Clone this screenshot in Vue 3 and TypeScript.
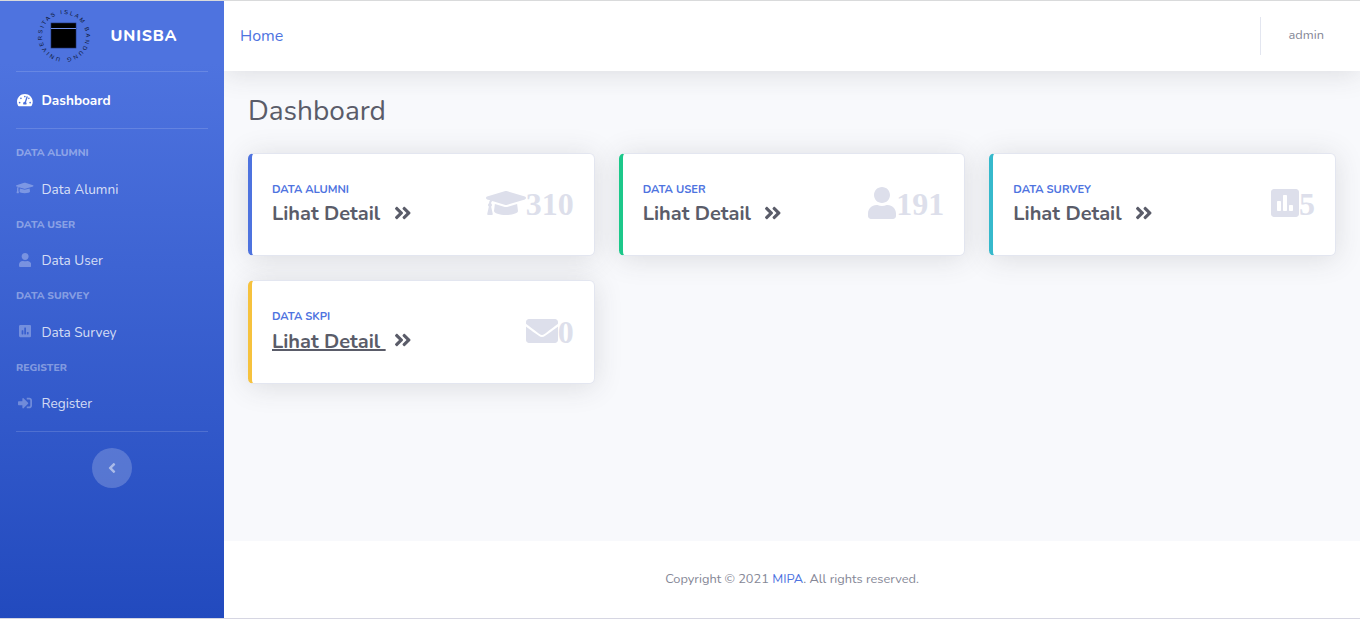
<script setup lang="ts">
interface Icon {
  w: number
  d: string
}

const icons: Record<string, Icon> = {
  tachometer: {
    w: 576,
    d: 'M288 32C128.94 32 0 160.94 0 320c0 52.8 14.25 102.26 39.06 144.8 5.61 9.62 16.3 15.2 27.44 15.2h443c11.14 0 21.83-5.58 27.44-15.2C561.75 422.26 576 372.8 576 320c0-159.06-128.94-288-288-288zm0 64c14.71 0 26.58 10.13 30.32 23.65-1.11 2.26-2.64 4.23-3.45 6.67l-9.22 27.67c-5.13 3.49-10.97 6.01-17.64 6.01-17.67 0-32-14.33-32-32S270.33 96 288 96zM96 384c-17.67 0-32-14.33-32-32s14.33-32 32-32 32 14.33 32 32-14.33 32-32 32zm48-160c-17.67 0-32-14.33-32-32s14.33-32 32-32 32 14.33 32 32-14.33 32-32 32zm246.77-72.41l-61.33 184C343.13 347.33 352 364.54 352 384c0 11.72-3.38 22.55-8.88 32H232.88c-5.5-9.45-8.88-20.28-8.88-32 0-33.94 26.5-61.43 59.9-63.59l61.34-184.01c4.17-12.56 17.73-19.45 30.36-15.17 12.57 4.19 19.35 17.79 15.17 30.36zm14.66 57.2l15.52-46.55c3.47-1.29 7.13-2.23 11.05-2.23 17.67 0 32 14.33 32 32s-14.33 32-32 32c-11.38-.01-20.89-6.28-26.57-15.22zM480 384c-17.67 0-32-14.33-32-32s14.33-32 32-32 32 14.33 32 32-14.33 32-32 32z',
  },
  graduation: {
    w: 640,
    d: 'M622.34 153.2L343.4 67.5c-15.2-4.67-31.6-4.67-46.79 0L17.66 153.2c-23.54 7.23-23.54 38.36 0 45.59l48.63 14.94c-10.67 13.19-17.23 29.28-17.88 46.9C38.78 266.15 32 276.11 32 288c0 10.78 5.68 19.85 13.86 25.65L20.33 428.53C18.11 438.52 25.71 448 35.94 448h56.11c10.24 0 17.84-9.48 15.62-19.47L82.14 313.65C90.32 307.85 96 298.78 96 288c0-11.57-6.47-21.25-15.66-26.87.76-15.02 8.44-28.3 20.69-36.72L296.6 284.5c9.06 2.78 26.44 6.25 46.79 0l278.95-85.7c23.55-7.24 23.55-38.36 0-45.6zM352.79 315.09c-28.53 8.76-52.84 3.92-65.59 0l-145.02-44.55L128 384c0 35.35 85.96 64 192 64s192-28.65 192-64l-14.18-113.47-145.03 44.56z',
  },
  user: {
    w: 448,
    d: 'M224 256c70.7 0 128-57.3 128-128S294.7 0 224 0 96 57.3 96 128s57.3 128 128 128zm89.6 32h-16.7c-22.2 10.2-46.9 16-72.9 16s-50.6-5.8-72.9-16h-16.7C60.2 288 0 348.2 0 422.4V464c0 26.5 21.5 48 48 48h352c26.5 0 48-21.5 48-48v-41.6c0-74.2-60.2-134.4-134.4-134.4z',
  },
  poll: {
    w: 448,
    d: 'M400 32H48C21.5 32 0 53.5 0 80v352c0 26.5 21.5 48 48 48h352c26.5 0 48-21.5 48-48V80c0-26.5-21.5-48-48-48zM160 368c0 8.84-7.16 16-16 16h-32c-8.84 0-16-7.16-16-16V240c0-8.84 7.16-16 16-16h32c8.84 0 16 7.16 16 16v128zm96 0c0 8.84-7.16 16-16 16h-32c-8.84 0-16-7.16-16-16V144c0-8.84 7.16-16 16-16h32c8.84 0 16 7.16 16 16v224zm96 0c0 8.84-7.16 16-16 16h-32c-8.84 0-16-7.16-16-16v-64c0-8.84 7.16-16 16-16h32c8.84 0 16 7.16 16 16v64z',
  },
  envelope: {
    w: 512,
    d: 'M502.3 190.8c3.9-3.1 9.7-.2 9.7 4.7V400c0 26.5-21.5 48-48 48H48c-26.5 0-48-21.5-48-48V195.6c0-5 5.7-7.8 9.7-4.7 22.4 17.4 52.1 39.5 154.1 113.6 21.1 15.4 56.7 47.8 92.2 47.6 35.7.3 72-32.8 92.3-47.6 102-74.1 131.6-96.3 154-113.7zM256 320c23.2.4 56.6-29.2 73.4-41.4 132.7-96.3 142.8-104.7 173.4-128.7 5.8-4.5 9.2-11.5 9.2-18.9v-19c0-26.5-21.5-48-48-48H48c-26.5 0-48 21.5-48 48v19c0 7.4 3.4 14.3 9.2 18.9 30.6 23.9 40.7 32.4 173.4 128.7 16.8 12.2 50.2 41.8 73.4 41.4z',
  },
  signIn: {
    w: 512,
    d: 'M416 448h-84c-6.6 0-12-5.4-12-12v-40c0-6.6 5.4-12 12-12h84c17.7 0 32-14.3 32-32V160c0-17.7-14.3-32-32-32h-84c-6.6 0-12-5.4-12-12V76c0-6.6 5.4-12 12-12h84c53 0 96 43 96 96v192c0 53-43 96-96 96zm-47-201L201 79c-15-15-41-4.5-41 17v96H24c-13.3 0-24 10.7-24 24v96c0 13.3 10.7 24 24 24h136v96c0 21.5 26 32 41 17l168-168c9.3-9.4 9.3-24.6 0-34z',
  },
}

interface NavSection {
  heading: string
  label: string
  icon: Icon
}

const sections: NavSection[] = [
  { heading: 'Data Alumni', label: 'Data Alumni', icon: icons.graduation },
  { heading: 'Data User', label: 'Data User', icon: icons.user },
  { heading: 'Data Survey', label: 'Data Survey', icon: icons.poll },
  { heading: 'Register', label: 'Register', icon: icons.signIn },
]

interface StatCard {
  label: string
  count: number
  icon: Icon
  tone: string
  active?: boolean
}

const cards: StatCard[] = [
  { label: 'Data Alumni', count: 310, icon: icons.graduation, tone: 'primary' },
  { label: 'Data User', count: 191, icon: icons.user, tone: 'success' },
  { label: 'Data Survey', count: 5, icon: icons.poll, tone: 'info' },
  { label: 'Data SKPI', count: 0, icon: icons.envelope, tone: 'warning', active: true },
]
</script>

<template>
  <div class="page">
    <aside class="sidebar">
      <div class="brand">
        <svg class="logo" viewBox="0 0 54 54">
          <defs>
            <path id="ring" d="M23.4 48.7A22 22 0 1 1 29.4 48.87" />
          </defs>
          <text class="ring-text">
            <textPath href="#ring" textLength="131.5" lengthAdjust="spacing">UNIVERSITAS ISLAM BANDUNG</textPath>
          </text>
          <rect class="cube" x="14" y="14" width="25" height="25" />
          <rect class="band" x="14" y="19" width="25" height="1" />
        </svg>
        <span class="brand-name">UNISBA</span>
      </div>
      <hr class="divider" />
      <a class="nav-link active">
        <span class="nav-icon">
          <svg :viewBox="`0 0 ${icons.tachometer.w} 512`"><path :d="icons.tachometer.d" /></svg>
        </span>
        <span class="nav-text">Dashboard</span>
      </a>
      <hr class="divider spaced" />
      <template v-for="s in sections" :key="s.label">
        <div class="heading">{{ s.heading }}</div>
        <a class="nav-link">
          <span class="nav-icon">
            <svg :viewBox="`0 0 ${s.icon.w} 512`"><path :d="s.icon.d" /></svg>
          </span>
          <span class="nav-text">{{ s.label }}</span>
        </a>
      </template>
      <hr class="divider spaced" />
      <button class="toggle" aria-label="Toggle sidebar">
        <svg viewBox="0 0 256 512">
          <path d="M31.7 239l136-136c9.4-9.4 24.6-9.4 33.9 0l22.6 22.6c9.4 9.4 9.4 24.6 0 33.9L127.9 256l96.4 96.4c9.4 9.4 9.4 24.6 0 33.9L201.7 409c-9.4 9.4-24.6 9.4-33.9 0l-136-136c-9.5-9.4-9.5-24.6-.1-34z" />
        </svg>
      </button>
    </aside>

    <div class="content">
      <header class="topbar">
        <a class="home">Home</a>
        <div class="user-area">
          <span class="user-name">admin</span>
        </div>
      </header>

      <main class="main">
        <h1 class="title">Dashboard</h1>
        <div class="grid">
          <section v-for="c in cards" :key="c.label" class="card" :class="c.tone">
            <div class="card-text">
              <div class="card-label">{{ c.label }}</div>
              <a class="detail">
                <span class="detail-text" :class="{ underlined: c.active }">Lihat Detail&nbsp;</span>
                <svg class="chevrons" viewBox="0 0 448 512">
                  <path d="M224.3 273l-136 136c-9.4 9.4-24.6 9.4-33.9 0l-22.6-22.6c-9.4-9.4-9.4-24.6 0-33.9l96.4-96.4-96.4-96.4c-9.4-9.4-9.4-24.6 0-33.9L54.3 103c9.4-9.4 24.6-9.4 33.9 0l136 136c9.5 9.4 9.5 24.6.1 34zm192-34l-136-136c-9.4-9.4-24.6-9.4-33.9 0l-22.6 22.6c-9.4 9.4-9.4 24.6 0 33.9l96.4 96.4-96.4 96.4c-9.4 9.4-9.4 24.6 0 33.9l22.6 22.6c9.4 9.4 24.6 9.4 33.9 0l136-136c9.4-9.2 9.4-24.4 0-33.8z" />
                </svg>
              </a>
            </div>
            <div class="stat">
              <svg :viewBox="`0 0 ${c.icon.w} 512`"><path :d="c.icon.d" /></svg><span>{{ c.count }}</span>
            </div>
          </section>
        </div>
      </main>

      <footer class="footer">
        <span>Copyright © 2021 <a>MIPA</a>. All rights reserved.</span>
      </footer>
    </div>
  </div>
</template>

<style>
body {
  margin: 0;
  overflow: hidden;
}
</style>

<style scoped>
.page {
  box-sizing: border-box;
  display: flex;
  height: 619px;
  border-top: 1px solid #d9dadb;
  border-bottom: 1px solid #d6d6e2;
  font-family: Nunito, "Open Sans", sans-serif;
  font-size: 16px;
  line-height: 1.5;
  color: #858796;
  background: #f8f9fc;
}

.sidebar {
  display: flex;
  flex-direction: column;
  flex: 0 0 224px;
  background: linear-gradient(180deg, #4e73df 10%, #224abe 100%);
}

.brand {
  display: flex;
  align-items: center;
  height: 70px;
  padding-left: 36.6px;
}

.logo {
  width: 54px;
  height: 54px;
}

.ring-text {
  font-family: "Liberation Sans", sans-serif;
  font-size: 5.8px;
  fill: #0c1430;
}

.cube {
  fill: #000;
  stroke: #1c2d66;
  stroke-width: 0.6;
}

.band {
  fill: #6f8de6;
}

.brand-name {
  margin-left: 20px;
  font-weight: 800;
  letter-spacing: 0.8px;
  color: #fff;
}

.divider {
  width: 192px;
  height: 1px;
  margin: 0 16px;
  border: 0;
  background: rgba(255, 255, 255, 0.15);
}

.divider.spaced {
  margin-bottom: 16px;
}

.heading {
  padding-left: 16px;
  font-size: 10.4px;
  font-weight: 800;
  line-height: 15.6px;
  text-transform: uppercase;
  color: rgba(255, 255, 255, 0.4);
}

.nav-link {
  display: flex;
  align-items: center;
  gap: 8px;
  height: 56px;
  padding-left: 16px;
  font-size: 13.6px;
  color: rgba(255, 255, 255, 0.8);
}

.nav-link.active {
  font-weight: 700;
  color: #fff;
}

.nav-text {
  padding-top: 2.4px;
}

.nav-icon {
  display: flex;
  justify-content: center;
  width: 17.5px;
  padding-bottom: 0.8px;
  color: rgba(255, 255, 255, 0.3);
}

.active .nav-icon {
  color: #fff;
}

.nav-icon svg {
  flex: none;
  height: 14px;
}

svg path {
  fill: currentColor;
}

.toggle {
  display: flex;
  align-items: center;
  justify-content: center;
  align-self: center;
  width: 40px;
  height: 40px;
  padding: 0;
  border: 0;
  border-radius: 50%;
  background: rgba(255, 255, 255, 0.2);
  color: rgba(255, 255, 255, 0.5);
}

.toggle svg {
  width: 8px;
  height: 16px;
}

.content {
  display: flex;
  flex: 1;
  flex-direction: column;
  overflow: hidden;
}

.topbar {
  display: flex;
  align-items: center;
  justify-content: space-between;
  flex: 0 0 70px;
  padding: 0 36px 0 16px;
  background: #fff;
  box-shadow: 0 2.4px 28px 0 rgba(58, 59, 69, 0.15);
}

.home,
.footer a {
  color: #4e73df;
}

.user-area {
  display: flex;
  align-items: center;
  height: 38px;
  padding-left: 28px;
  border-left: 1px solid #e3e6f0;
  font-size: 12.8px;
}

.main {
  flex: 1;
  padding: 24px 24px 0;
}

.title {
  margin: 0 0 24px;
  font-size: 28px;
  font-weight: 400;
  line-height: 33.6px;
  color: #5a5c69;
}

.grid {
  display: grid;
  grid-template-columns: repeat(3, 1fr);
  gap: 24px;
}

.card {
  box-sizing: border-box;
  display: flex;
  align-items: center;
  justify-content: space-between;
  height: 103.6px;
  padding: 0 20px;
  border: 1px solid #e3e6f0;
  border-left-width: 4px;
  border-radius: 5.6px;
  background: #fff;
  box-shadow: 0 2.4px 28px 0 rgba(58, 59, 69, 0.15);
}

.primary {
  border-left-color: #4e73df;
}

.success {
  border-left-color: #1cc88a;
}

.info {
  border-left-color: #36b9cc;
}

.warning {
  border-left-color: #f6c23e;
}

.card-text {
  padding-bottom: 0.8px;
}

.card-label {
  margin-bottom: 3.6px;
  font-size: 11.2px;
  font-weight: 700;
  line-height: 16.8px;
  text-transform: uppercase;
  color: #4e73df;
}

.detail {
  display: flex;
  align-items: center;
  gap: 8px;
  font-size: 20px;
  font-weight: 700;
  line-height: 24px;
  color: #5a5c69;
}

.underlined {
  text-decoration: underline;
}

.chevrons {
  width: 17.5px;
  height: 20px;
  margin-bottom: 3px;
}

.stat {
  margin-bottom: 1.2px;
  font-family: "Liberation Serif", serif;
  font-size: 32px;
  font-weight: 900;
  line-height: 32px;
  white-space: nowrap;
  color: #dddfeb;
}

.stat svg {
  height: 32px;
  vertical-align: -4px;
}

.footer {
  display: flex;
  align-items: center;
  justify-content: center;
  flex: 0 0 76.8px;
  font-size: 12.8px;
  background: #fff;
}
</style>
